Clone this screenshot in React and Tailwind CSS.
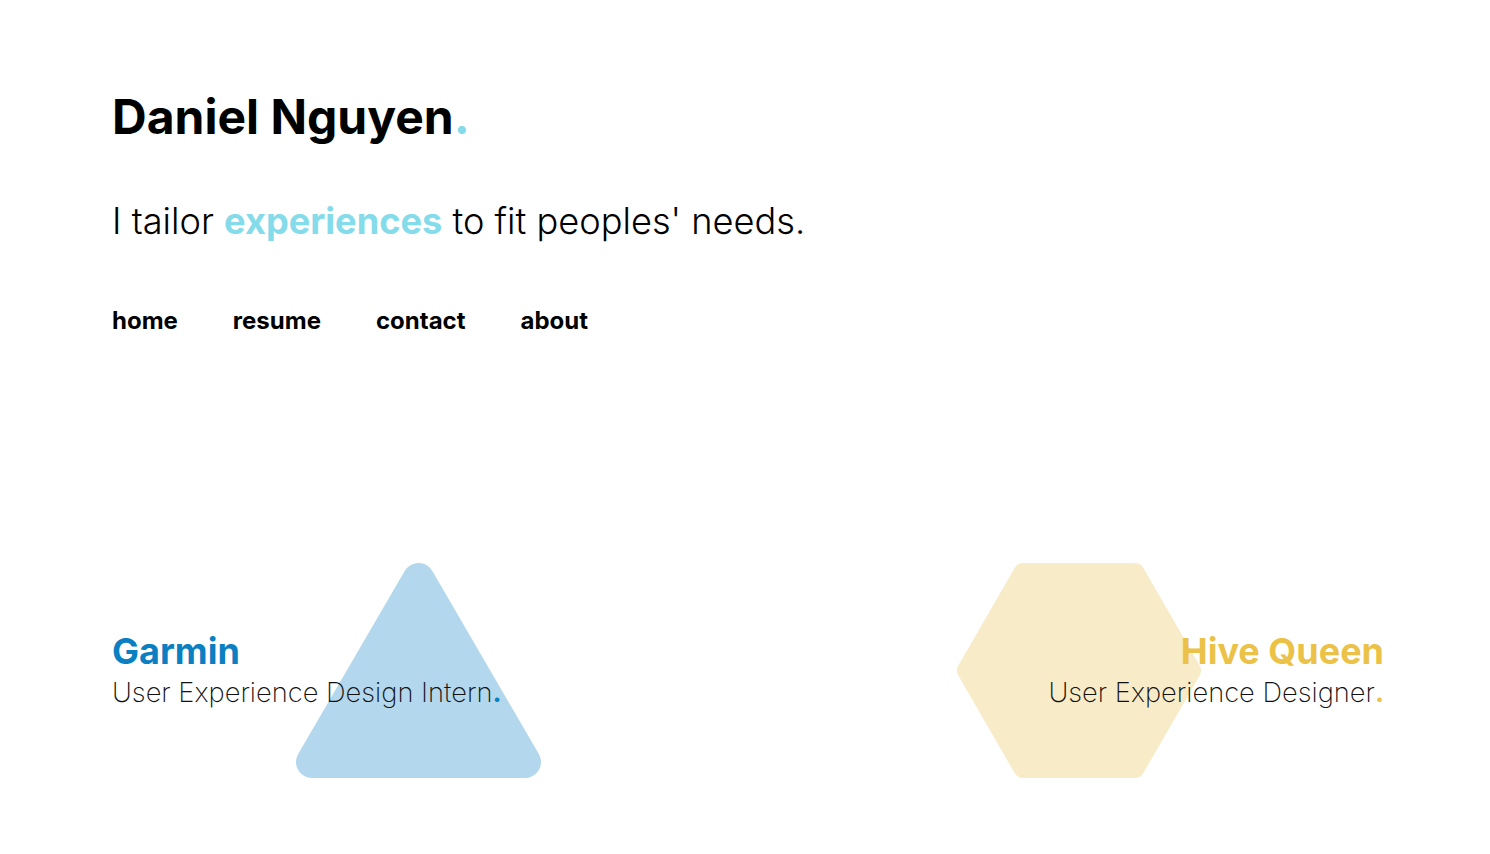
import React from "react";

const font = { fontFamily: "Inter, 'Noto Sans', sans-serif" };

function Triangle() {
  return (
    <svg width="245" height="215" viewBox="0 0 245 215" className="block">
      <polygon
        points="122.5,16 16,199 229,199"
        fill="#b3d7ec"
        stroke="#b3d7ec"
        strokeWidth="32"
        strokeLinejoin="round"
      />
    </svg>
  );
}

function Hexagon() {
  return (
    <svg width="244" height="215" viewBox="0 0 244 215" className="block">
      <polygon
        points="10,107.5 66.3,10 177.7,10 234,107.5 177.7,205 66.3,205"
        fill="#f8ebc8"
        stroke="#f8ebc8"
        strokeWidth="20"
        strokeLinejoin="round"
      />
    </svg>
  );
}

export default function App() {
  return (
    <div className="min-h-[854px] w-full bg-white text-[#111]" style={font}>
      <div className="pl-[112px] pr-[106px]">
        {/* Header */}
        <h1 className="pt-[93px] text-[48px] font-bold leading-none text-black">
          Daniel Nguyen<span className="text-[#84dbe9]">.</span>
        </h1>
        <p className="mt-[62px] text-[36.2px] font-light leading-none text-black">
          I tailor <span className="font-bold text-[#84dbe9]">experiences</span> to fit peoples' needs.
        </p>
        <nav className="mt-[70px] flex gap-[55px] text-[24px] font-bold leading-none text-black">
          <a href="#">home</a>
          <a href="#">resume</a>
          <a href="#">contact</a>
          <a href="#">about</a>
        </nav>

        {/* Work */}
        <div className="mt-[230px] flex justify-between">
          <div className="relative h-[215px] w-[500px]">
            <div className="absolute left-[184px] top-0">
              <Triangle />
            </div>
            <div className="relative flex h-full flex-col justify-center pb-[2px]">
              <h2 className="text-[36px] font-bold leading-none text-[#0a7fc2]">Garmin</h2>
              <p className="mt-[10px] text-[27.3px] font-extralight leading-none text-[#111]">
                User Experience Design Intern<span className="font-bold text-[#0a7fc2]">.</span>
              </p>
            </div>
          </div>

          <div className="relative h-[215px] w-[500px]">
            <div className="absolute right-[183px] top-0">
              <Hexagon />
            </div>
            <div className="relative flex h-full flex-col items-end justify-center pb-[2px] text-right">
              <h2 className="text-[36px] font-bold leading-none text-[#ebc247]">Hive Queen</h2>
              <p className="mt-[10px] text-[27.3px] font-extralight leading-none text-[#111]">
                User Experience Designer<span className="font-bold text-[#ebc247]">.</span>
              </p>
            </div>
          </div>
        </div>
      </div>
    </div>
  );
}
